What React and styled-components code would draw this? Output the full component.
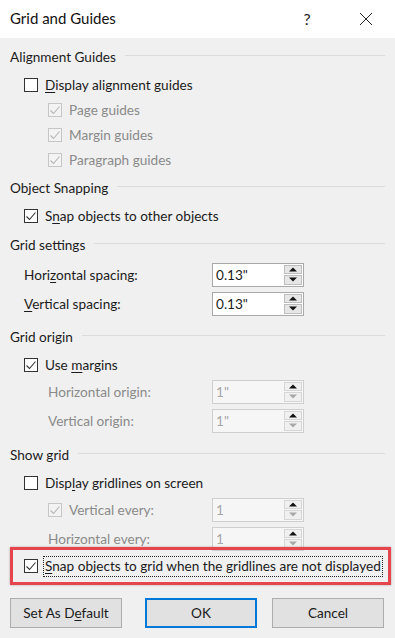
import React from "react";
import styled, { createGlobalStyle } from "styled-components";

const GlobalStyle = createGlobalStyle`
  html, body {
    margin: 0;
    padding: 0;
    background: #f0f0f0;
  }
  body {
    font-family: Lato, "Noto Sans", sans-serif;
    font-size: 13.6px;
    color: #1b1b1b;
  }
  u {
    text-decoration-thickness: 1px;
    text-underline-offset: 2px;
  }
`;

const Dialog = styled.div`
  width: 395px;
  height: 638px;
  display: flex;
  flex-direction: column;
  background: #f0f0f0;
  overflow: hidden;
`;

const TitleBar = styled.div`
  height: 38px;
  flex: 0 0 38px;
  background: #ffffff;
  display: flex;
  align-items: center;
  padding-left: 10px;
  padding-right: 6px;
`;

const Title = styled.div`
  flex: 1;
  font-size: 15px;
  color: #111;
  padding-bottom: 2px;
`;

const HelpButton = styled.div`
  width: 24px;
  text-align: center;
  font-size: 16px;
  color: #222;
  margin-right: 24px;
  padding-bottom: 2px;
`;

const CloseButton = styled.div`
  width: 46px;
  height: 38px;
  display: flex;
  align-items: center;
  justify-content: center;
`;

const Body = styled.div`
  padding: 7px 4px 0 10px;
  display: flex;
  flex-direction: column;
`;

const Header = styled.div`
  height: 24px;
  display: flex;
  align-items: center;
  gap: 9px;
  margin-top: ${(p) => p.$top || 0}px;
  margin-bottom: 3px;
  margin-right: 6px;

  &::after {
    content: "";
    flex: 1;
    height: 1px;
    background: #dcdcdc;
    margin-top: -3px;
  }
`;

const CheckRow = styled.label`
  height: 25px;
  display: flex;
  align-items: center;
  gap: 7px;
  padding-left: ${(p) => p.$indent}px;
  color: ${(p) => (p.$disabled ? "#8a8a8a" : "#1b1b1b")};
`;

const Box = styled.span`
  width: 14px;
  height: 14px;
  box-sizing: border-box;
  flex: 0 0 14px;
  border: 1px solid ${(p) => (p.$disabled ? "#c6c6c6" : "#333")};
  background: ${(p) => (p.$disabled ? "#f3f3f3" : "#fff")};
  display: flex;
  align-items: center;
  justify-content: center;
`;

const FieldRow = styled.div`
  height: 29px;
  display: grid;
  grid-template-columns: 202px 92px;
  align-items: center;
`;

const FieldLabel = styled.div`
  padding-left: ${(p) => p.$indent}px;
  color: ${(p) => (p.$disabled ? "#8a8a8a" : "#1b1b1b")};
  display: flex;
  align-items: center;
  gap: 7px;
`;

const Spin = styled.div`
  height: 24px;
  box-sizing: border-box;
  border: 1px solid ${(p) => (p.$disabled ? "#cfcfcf" : "#a9a9a9")};
  background: ${(p) => (p.$disabled ? "#f6f6f6" : "#fff")};
  display: flex;
  align-items: stretch;
`;

const SpinValue = styled.div`
  flex: 1;
  padding-left: 3px;
  display: flex;
  align-items: center;
  color: ${(p) => (p.$disabled ? "#a6a6a6" : "#1b1b1b")};
`;

const SpinButtons = styled.div`
  width: 18px;
  padding: 1px 1px 1px 0;
  display: flex;
  flex-direction: column;
  gap: 1px;
`;

const SpinButton = styled.div`
  flex: 1;
  box-sizing: border-box;
  border: 1px solid ${(p) => (p.$disabled ? "#d6d6d6" : "#bdbdbd")};
  background: ${(p) => (p.$disabled ? "#f0f0f0" : "#e6e6e6")};
  display: flex;
  align-items: center;
  justify-content: center;
`;

const Highlight = styled.div`
  margin-top: -6px;
  height: 38px;
  box-sizing: border-box;
  border: 3px solid #e5464e;
  box-shadow: 0 0 2px rgba(80, 0, 0, 0.35);
  display: flex;
  align-items: center;
  padding-left: 11px;
  gap: 5px;
  position: relative;
  white-space: nowrap;
`;

const FocusText = styled.span`
  border: 1px dotted #222;
  padding: 0 1px 1px 1px;
  line-height: 18px;
`;

const Buttons = styled.div`
  display: flex;
  margin-top: 13px;
`;

const Button = styled.div`
  width: 112px;
  height: 30px;
  box-sizing: border-box;
  margin-left: ${(p) => p.$left || 0}px;
  background: #e1e1e1;
  border: ${(p) => (p.$primary ? "2px solid #0078d7" : "1px solid #adadad")};
  display: flex;
  align-items: center;
  justify-content: center;
  color: #1b1b1b;
`;

function Check({ checked, disabled }) {
  const color = disabled ? "#b5b5b5" : "#333";
  return (
    <Box $disabled={disabled}>
      {checked && (
        <svg width="12" height="12" viewBox="0 0 12 12">
          <polyline points="1.5,6.5 4.5,9.5 10.5,2.5" fill="none" stroke={color} strokeWidth="1.1" />
        </svg>
      )}
    </Box>
  );
}

function Arrow({ up, disabled }) {
  const color = disabled ? "#a8a8a8" : "#111";
  return (
    <svg width="8" height="5" viewBox="0 0 8 5">
      {up ? <polygon points="0,4.5 8,4.5 4,0.5" fill={color} /> : <polygon points="0,0.5 8,0.5 4,4.5" fill={color} />}
    </svg>
  );
}

function Spinner({ value, disabled }) {
  return (
    <Spin $disabled={disabled}>
      <SpinValue $disabled={disabled}>{value}</SpinValue>
      <SpinButtons>
        <SpinButton $disabled={disabled}>
          <Arrow up />
        </SpinButton>
        <SpinButton $disabled={disabled}>
          <Arrow disabled={disabled} />
        </SpinButton>
      </SpinButtons>
    </Spin>
  );
}

export default function App() {
  return (
    <>
      <GlobalStyle />
      <Dialog>
        <TitleBar>
          <Title>Grid and Guides</Title>
          <HelpButton>?</HelpButton>
          <CloseButton>
            <svg width="14" height="14" viewBox="0 0 14 14">
              <path d="M1 1 L13 13 M13 1 L1 13" stroke="#222" strokeWidth="1" />
            </svg>
          </CloseButton>
        </TitleBar>
        <Body>
          <Header>Alignment Guides</Header>
          <CheckRow $indent={14}>
            <Check />
            <span>
              <u>D</u>isplay alignment guides
            </span>
          </CheckRow>
          <CheckRow $indent={38} $disabled>
            <Check checked disabled />
            Page guides
          </CheckRow>
          <CheckRow $indent={38} $disabled>
            <Check checked disabled />
            Margin guides
          </CheckRow>
          <CheckRow $indent={38} $disabled>
            <Check checked disabled />
            Paragraph guides
          </CheckRow>

          <Header $top={4}>Object Snapping</Header>
          <CheckRow $indent={14}>
            <Check checked />
            <span>
              S<u>n</u>ap objects to other objects
            </span>
          </CheckRow>

          <Header $top={5}>Grid settings</Header>
          <FieldRow>
            <FieldLabel $indent={14}>
              <span>
                Hori<u>z</u>ontal spacing:
              </span>
            </FieldLabel>
            <Spinner value={'0.13"'} />
          </FieldRow>
          <FieldRow>
            <FieldLabel $indent={14}>
              <span>
                <u>V</u>ertical spacing:
              </span>
            </FieldLabel>
            <Spinner value={'0.13"'} />
          </FieldRow>

          <Header $top={7}>Grid origin</Header>
          <CheckRow $indent={14}>
            <Check checked />
            <span>
              Use <u>m</u>argins
            </span>
          </CheckRow>
          <FieldRow>
            <FieldLabel $indent={38} $disabled>
              Horizontal origin:
            </FieldLabel>
            <Spinner value={'1"'} disabled />
          </FieldRow>
          <FieldRow>
            <FieldLabel $indent={38} $disabled>
              Vertical origin:
            </FieldLabel>
            <Spinner value={'1"'} disabled />
          </FieldRow>

          <Header $top={8}>Show grid</Header>
          <CheckRow $indent={14}>
            <Check />
            <span>
              Disp<u>l</u>ay gridlines on screen
            </span>
          </CheckRow>
          <FieldRow>
            <FieldLabel $indent={38} $disabled>
              <Check checked disabled />
              Vertical every:
            </FieldLabel>
            <Spinner value="1" disabled />
          </FieldRow>
          <FieldRow>
            <FieldLabel $indent={38} $disabled>
              Horizontal every:
            </FieldLabel>
            <Spinner value="1" disabled />
          </FieldRow>

          <Highlight>
            <Check checked />
            <FocusText>
              <u>S</u>nap objects to grid when the gridlines are not displayed
            </FocusText>
          </Highlight>

          <Buttons>
            <Button>
              <span>
                Set As D<u>e</u>fault
              </span>
            </Button>
            <Button $primary $left={23}>
              OK
            </Button>
            <Button $left={15}>Cancel</Button>
          </Buttons>
        </Body>
      </Dialog>
    </>
  );
}
